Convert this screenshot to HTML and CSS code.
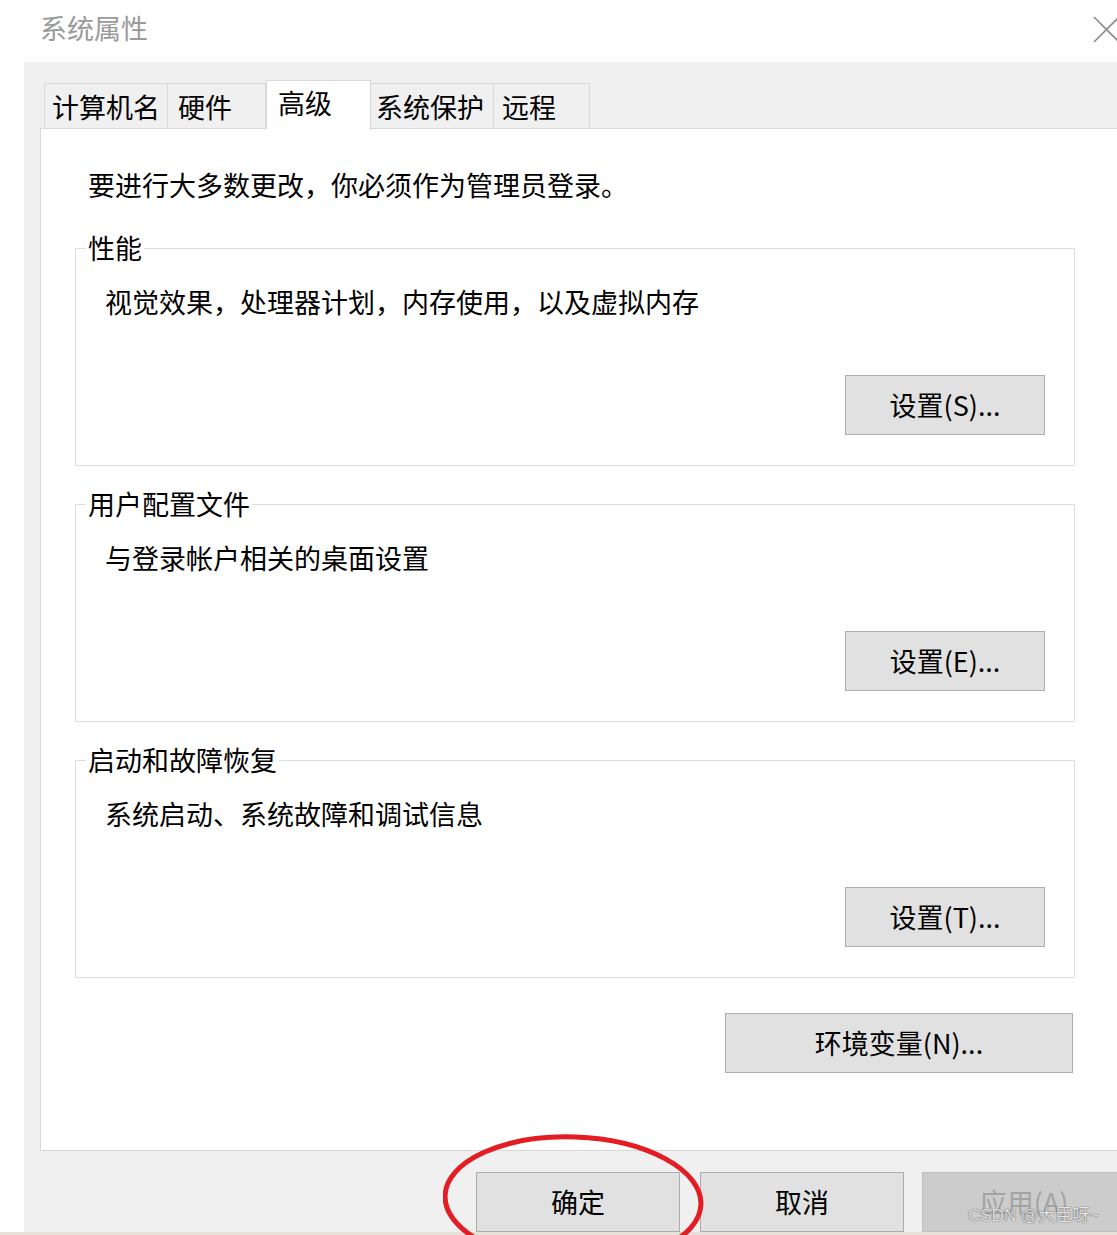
FILE: index.html
```html
<!DOCTYPE html>
<html lang="zh-CN">
<head>
<meta charset="utf-8">
<title>系统属性</title>
<link rel="stylesheet" href="styles.css">
</head>
<body>
<div class="window">
  <div class="titlebar">
    <span class="title">系统属性</span>
    <svg class="close" width="24" height="26" viewBox="0 0 24 26">
      <path d="M1 1 L26 26 M1 26 L26 1" stroke="#8a8a8a" stroke-width="1.6" fill="none"/>
    </svg>
  </div>
  <div class="panel">
    <div class="tabs">
      <div class="tab t1">计算机名</div>
      <div class="tab t2">硬件</div>
      <div class="tab sel">高级</div>
      <div class="tab t4">系统保护</div>
      <div class="tab t5">远程</div>
    </div>
    <div class="page">
      <p class="intro">要进行大多数更改，你必须作为管理员登录。</p>
      <fieldset class="group first">
        <legend>性能</legend>
        <p class="desc">视觉效果，处理器计划，内存使用，以及虚拟内存</p>
        <div class="row"><button class="btn">设置(S)...</button></div>
      </fieldset>
      <fieldset class="group">
        <legend>用户配置文件</legend>
        <p class="desc">与登录帐户相关的桌面设置</p>
        <div class="row"><button class="btn">设置(E)...</button></div>
      </fieldset>
      <fieldset class="group">
        <legend>启动和故障恢复</legend>
        <p class="desc">系统启动、系统故障和调试信息</p>
        <div class="row"><button class="btn">设置(T)...</button></div>
      </fieldset>
      <button class="btn env">环境变量(N)...</button>
    </div>
    <div class="actions">
      <button class="btn act ok">确定</button>
      <button class="btn act cancel">取消</button>
      <button class="btn act apply" disabled>应用(A)</button>
    </div>
  </div>
  <div class="taskbar"></div>
  <svg class="mark" width="280" height="130" viewBox="0 0 280 130">
    <ellipse cx="130" cy="67" rx="128" ry="63" fill="none" stroke="#e41c23" stroke-width="5" transform="rotate(2 130 67)"/>
  </svg>
  <div class="watermark">CSDN @大臣呀~</div>
</div>
</body>
</html>
```
FILE: styles.css
```css
html, body {
  margin: 0;
  padding: 0;
  background: #ffffff;
  overflow: hidden;
}
body {
  width: 1117px;
  height: 1235px;
  font-family: "Noto Sans CJK SC", "Noto Sans", sans-serif;
  font-size: 27px;
  color: #000;
}
.window {
  position: relative;
  width: 1117px;
  height: 1235px;
  overflow: hidden;
}
.titlebar {
  height: 62px;
  display: flex;
  align-items: flex-start;
  justify-content: space-between;
  padding-left: 40px;
  box-sizing: border-box;
}
.title {
  color: #9a9a9a;
  font-size: 27px;
  line-height: 36px;
  margin-top: 10px;
}
.close {
  margin-top: 16px;
  overflow: visible;
}
.panel {
  margin-left: 24px;
  width: 1200px;
  height: 1170px;
  background: #f0f0f0;
  padding-left: 16px;
  box-sizing: border-box;
}
.tabs {
  display: flex;
  align-items: flex-end;
  height: 66px;
  padding-left: 4px;
}
.tab {
  box-sizing: border-box;
  height: 45px;
  border: 1px solid #d9d9d9;
  border-bottom: none;
  background: #f0f0f0;
  line-height: 36px;
  padding-top: 5px;
  white-space: nowrap;
}
.t1 { width: 124px; padding-left: 7px; }
.t2 { width: 99px; margin-left: -1px; padding-left: 10px; }
.sel {
  width: 105px;
  height: 50px;
  margin-bottom: -2px;
  padding-top: 4px;
  padding-left: 11px;
  background: #ffffff;
  position: relative;
  z-index: 1;
}
.t4 { width: 124px; margin-left: -1px; padding-left: 5px; }
.t5 { width: 97px; margin-left: -1px; padding-left: 8px; }
.page {
  box-sizing: border-box;
  width: 1140px;
  height: 1023px;
  background: #ffffff;
  border: 1px solid #d9d9d9;
  padding-top: 38px;
}
.intro {
  margin: 0 0 0 47px;
  line-height: 36px;
}
.group {
  box-sizing: border-box;
  width: 1000px;
  margin: 20px 0 0 34px;
  border: 1px solid #dedede;
  padding: 18px 0 30px 0;
  min-inline-size: 0;
}
.group.first {
  margin-top: 27px;
}
.group legend {
  margin-left: 10px;
  padding: 0 2px;
  line-height: 36px;
}
.desc {
  margin: 0;
  padding-left: 29px;
  line-height: 36px;
}
.row {
  display: flex;
  justify-content: flex-end;
  margin-top: 55px;
  padding-right: 29px;
}
.btn {
  font-family: inherit;
  font-size: 27px;
  color: #000;
  background: #e1e1e1;
  border: 1px solid #adadad;
  box-sizing: border-box;
  width: 200px;
  height: 60px;
  padding: 0;
  line-height: 36px;
  display: block;
}
.env {
  width: 348px;
  margin: 35px 0 0 684px;
}
.actions {
  display: flex;
  padding-top: 21px;
  padding-left: 436px;
}
.act {
  width: 204px;
  height: 60px;
}
.cancel { margin-left: 20px; }
.apply {
  margin-left: 18px;
  background: #cccccc;
  border-color: #bfbfbf;
  color: #a3a3a3;
}
.taskbar {
  height: 3px;
  background: #e6e1d8;
}
.mark {
  position: absolute;
  left: 443px;
  top: 1133px;
}
.watermark {
  position: absolute;
  left: 968px;
  top: 1204px;
  font-family: "Liberation Sans", "Noto Sans CJK SC", sans-serif;
  font-size: 17px;
  line-height: 24px;
  color: rgba(255, 255, 255, 0.85);
  text-shadow: 0 0 1px #555, 0 0 1px #555;
  white-space: nowrap;
}
```
